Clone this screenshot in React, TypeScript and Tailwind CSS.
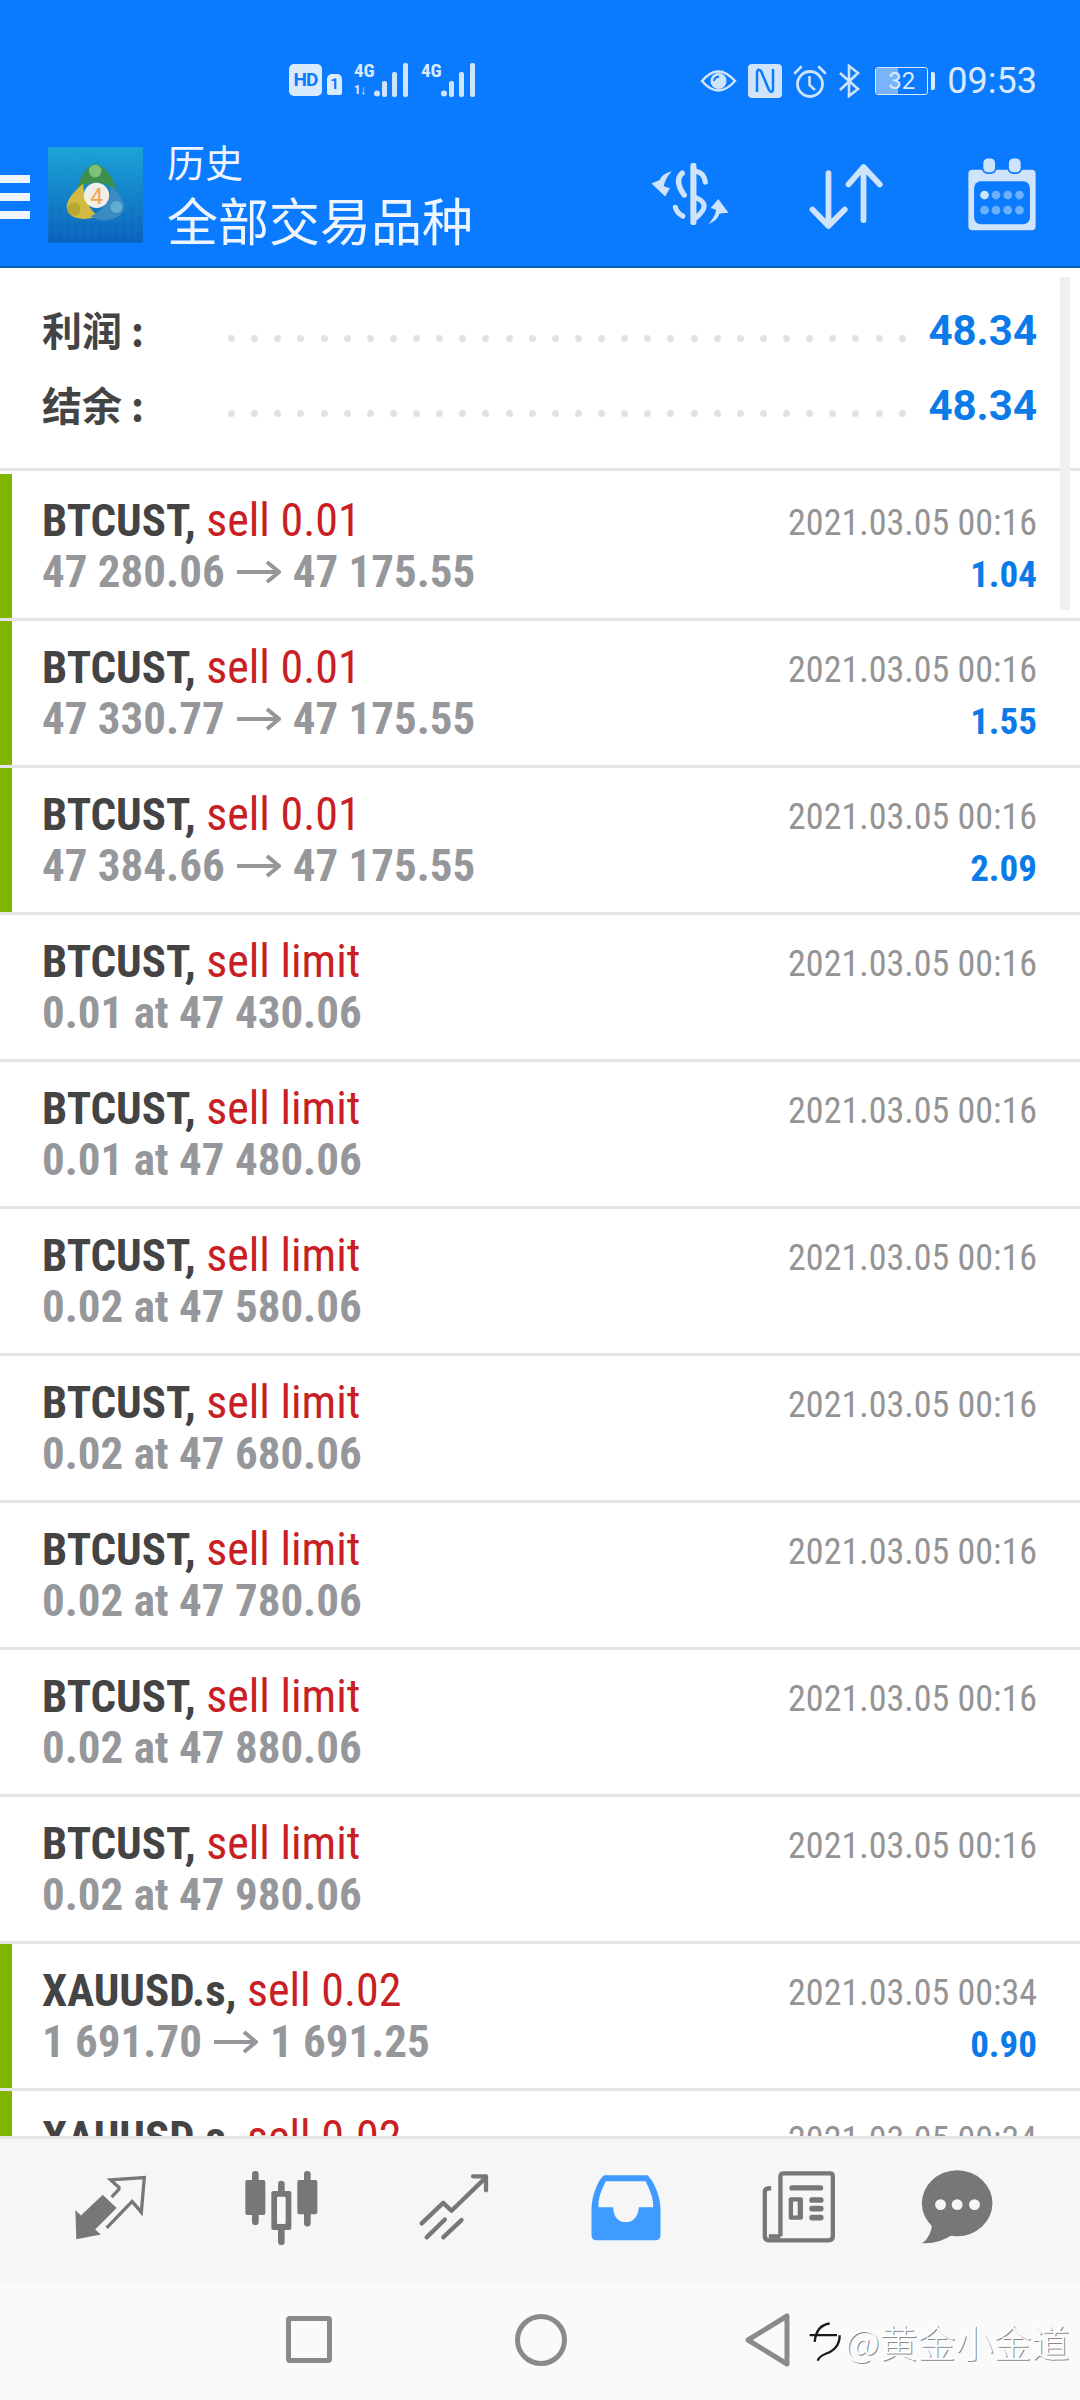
const PALE = "#cfe4fb";
const ICON = "#777777";

const rows = [
  { sym: "BTCUST,", act: "sell 0.01", from: "47 280.06", to: "47 175.55", date: "2021.03.05 00:16", val: "1.04" },
  { sym: "BTCUST,", act: "sell 0.01", from: "47 330.77", to: "47 175.55", date: "2021.03.05 00:16", val: "1.55" },
  { sym: "BTCUST,", act: "sell 0.01", from: "47 384.66", to: "47 175.55", date: "2021.03.05 00:16", val: "2.09" },
  { sym: "BTCUST,", act: "sell limit", from: "0.01 at 47 430.06", date: "2021.03.05 00:16" },
  { sym: "BTCUST,", act: "sell limit", from: "0.01 at 47 480.06", date: "2021.03.05 00:16" },
  { sym: "BTCUST,", act: "sell limit", from: "0.02 at 47 580.06", date: "2021.03.05 00:16" },
  { sym: "BTCUST,", act: "sell limit", from: "0.02 at 47 680.06", date: "2021.03.05 00:16" },
  { sym: "BTCUST,", act: "sell limit", from: "0.02 at 47 780.06", date: "2021.03.05 00:16" },
  { sym: "BTCUST,", act: "sell limit", from: "0.02 at 47 880.06", date: "2021.03.05 00:16" },
  { sym: "BTCUST,", act: "sell limit", from: "0.02 at 47 980.06", date: "2021.03.05 00:16" },
  { sym: "XAUUSD.s,", act: "sell 0.02", from: "1 691.70", to: "1 691.25", date: "2021.03.05 00:34", val: "0.90" },
  { sym: "XAUUSD.s,", act: "sell 0.02", from: "1 691.70", to: "1 691.25", date: "2021.03.05 00:34", val: "0.90" },
];

function Signal() {
  return (
    <svg width="36" height="34" viewBox="0 0 36 34">
      <circle cx="3" cy="30.5" r="3" fill={PALE} />
      <rect x="8" y="18" width="5" height="16" rx="2" fill={PALE} />
      <rect x="18" y="9" width="5" height="25" rx="2" fill={PALE} />
      <rect x="29" y="0" width="5" height="34" rx="2" fill={PALE} />
    </svg>
  );
}

function StatusBar() {
  return (
    <div className="h-[146px] pt-[63px] pl-[289px] pr-[43px] flex items-start justify-between text-[#d9eafd]">
      <div className="flex items-start h-[34px]">
        <div className="w-[33px] h-[32px] mt-[1px] rounded-[5px] bg-[#d9eafd] text-[#0a7aff] text-[19px] font-bold font-['Roboto'] leading-[32px] text-center tracking-tighter">
          HD
        </div>
        <div className="ml-[5px] mt-[11px] w-[15px] h-[21px] rounded-t-[5px] rounded-b-[2px] bg-[#d9eafd] text-[#0a7aff] text-[15px] font-bold font-['Roboto'] leading-[21px] text-center">
          1
        </div>
        <div className="ml-[12px] w-[20px] flex flex-col font-['Roboto'] font-bold font-stretch-condensed leading-none">
          <span className="text-[19px] -mt-[2px]">4G</span>
          <span className="text-[13px] mt-[3px] tracking-tighter">1↓</span>
        </div>
        <Signal />
        <div className="ml-[11px] w-[20px] font-['Roboto'] font-bold font-stretch-condensed leading-none">
          <span className="text-[19px] block -mt-[2px]">4G</span>
        </div>
        <Signal />
      </div>
      <div className="flex items-center h-[36px]">
        <svg width="37" height="26" viewBox="0 0 37 26">
          <path d="M2 13 Q18 -6 35 13 Q18 32 2 13Z" fill="none" stroke={PALE} strokeWidth="2.5" />
          <circle cx="18.5" cy="13" r="8" fill={PALE} />
          <path d="M14 13 Q14.5 9 19 8.5" fill="none" stroke="#0a7aff" strokeWidth="2" />
        </svg>
        <svg className="ml-[11px]" width="34" height="34" viewBox="0 0 34 34">
          <rect width="34" height="34" rx="4" fill={PALE} />
          <path d="M9 28 L9 8 Q10 4 13 7 L21 26 Q24 30 25 26 L25 5" fill="none" stroke="#0a7aff" strokeWidth="2.5" />
        </svg>
        <svg className="ml-[11px]" width="34" height="33" viewBox="0 0 34 33">
          <circle cx="17" cy="19" r="12.5" fill="none" stroke={PALE} strokeWidth="2.8" />
          <path d="M16.5 11 L16.5 20 L22 25" fill="none" stroke={PALE} strokeWidth="2.6" />
          <path d="M2 8 L8 2 M26 2 L32 8" stroke={PALE} strokeWidth="2.6" strokeLinecap="round" />
        </svg>
        <svg className="ml-[11px]" width="22" height="34" viewBox="0 0 22 34">
          <path d="M2 9 L20 25 L11 32 L11 2 L20 9 L2 26" fill="none" stroke={PALE} strokeWidth="2.6" />
        </svg>
        <div className="ml-[15px] relative w-[53px] h-[28px] rounded-[3px] border border-[#d9eafd] overflow-hidden text-center font-['Roboto'] text-[24px] leading-[26px]">
          <div className="absolute left-0 top-0 bottom-0 w-[22px] bg-[#79b4fb]" />
          <span className="relative">32</span>
        </div>
        <div className="ml-[3px] w-[4px] h-[18px] rounded-r-[2px] bg-[#d9eafd]" />
        <span className="ml-[12px] font-['Roboto'] text-[36px] leading-none">09:53</span>
      </div>
    </div>
  );
}

function Mt4Logo() {
  return (
    <svg width="95" height="96" viewBox="24 20 286 288">
      <defs>
        <linearGradient id="mt" x1="0" y1="0" x2="0" y2="1">
          <stop offset="0" stopColor="#1aa3d6" />
          <stop offset="1" stopColor="#0a62bd" />
        </linearGradient>
        <pattern id="mtgrid" width="24" height="24" patternUnits="userSpaceOnUse">
          <path d="M24 0 L0 0 L0 24" fill="none" stroke="#ffffff" strokeOpacity="0.08" strokeWidth="2" />
        </pattern>
      </defs>
      <rect x="24" y="20" width="286" height="288" fill="url(#mt)" />
      <rect x="24" y="20" width="286" height="288" fill="url(#mtgrid)" />
      <path d="M112 148 Q124 82 166 70 Q212 82 230 150 Q196 126 170 126 Q142 126 112 148Z" fill="#3f8f4c" />
      <circle cx="166" cy="92" r="19" fill="#7cc27a" />
      <path d="M130 130 Q80 170 80 202 Q88 236 130 236 Q150 236 176 228 Q132 196 130 130Z" fill="#d3bb42" />
      <circle cx="102" cy="206" r="20" fill="#b9a734" />
      <path d="M214 136 Q256 172 254 206 Q238 238 196 240 Q176 240 152 228 Q206 206 214 136Z" fill="#3a8cc0" />
      <circle cx="230" cy="200" r="18" fill="#62aed0" />
      <circle cx="170" cy="165" r="38" fill="#f4efe6" />
      <text x="170" y="190" textAnchor="middle" fontSize="68" fontFamily="Roboto" fill="#efa650">4</text>
    </svg>
  );
}

function Header() {
  return (
    <div className="h-[122px] border-b-[2px] border-[#0a5fa8] flex items-start">
      <div className="w-[30px] mt-[29px] flex flex-col gap-[10px]">
        <div className="h-[8px] bg-[#eef5fe]" />
        <div className="h-[8px] bg-[#eef5fe]" />
        <div className="h-[8px] bg-[#eef5fe]" />
      </div>
      <div className="ml-[18px] mt-[1px]">
        <Mt4Logo />
      </div>
      <div className="ml-[24px] flex flex-col text-[#eef5fe] font-['Noto_Sans_CJK_SC',sans-serif]">
        <span className="text-[38px] leading-[44px] -mt-[7px]">历史</span>
        <span className="text-[51px] leading-[60px] mt-[6px]">全部交易品种</span>
      </div>
      <div className="ml-auto pr-[43px] flex items-start">
        <svg className="mt-[17px]" width="80" height="62" viewBox="320 368 230 182">
          <g fill="none" stroke={PALE} strokeWidth="18" strokeLinecap="round">
            <path d="M445 376 L445 542" />
            <path d="M412 398 Q388 420 418 462" strokeWidth="16" />
            <path d="M453 392 Q476 396 480 424" strokeWidth="15" />
            <path d="M453 470 Q500 490 453 528" strokeWidth="15" />
            <path d="M392 498 Q396 515 414 524" strokeWidth="15" />
          </g>
          <path d="M382 392 Q352 400 346 418 L322 428 L362 466 L376 442 L358 436 Q362 412 382 392Z" fill={PALE} />
          <path d="M488 548 Q516 536 522 516 L548 514 L518 474 L496 500 L512 506 Q508 528 488 548Z" fill={PALE} />
        </svg>
        <svg className="ml-[79px] mt-[17px]" width="75" height="68" viewBox="780 365 220 200">
          <g fill="none" stroke={PALE} strokeWidth="17" strokeLinecap="round" strokeLinejoin="round">
            <path d="M837 395 L837 548 M790 502 L837 550 L885 502" />
            <path d="M940 533 L940 377 M896 428 L940 377 L988 428" />
          </g>
        </svg>
        <svg className="ml-[83px] mt-[11px]" width="70" height="74" viewBox="1240 350 206 220">
          <rect x="1243" y="388" width="200" height="180" rx="12" fill={PALE} />
          <rect x="1260" y="422" width="166" height="128" rx="20" fill="#0a7aff" />
          <rect x="1285" y="352" width="40" height="46" rx="16" fill={PALE} stroke="#0a7aff" strokeWidth="5" />
          <rect x="1361" y="352" width="40" height="46" rx="16" fill={PALE} stroke="#0a7aff" strokeWidth="5" />
          {[1291, 1325, 1360, 1395].map((x, i) => (
            <circle key={x} cx={x} cy="463" r="13" fill={i === 0 ? PALE : "#6fb0fb"} />
          ))}
          {[1291, 1325, 1360, 1395].map((x) => (
            <circle key={x} cx={x} cy="508" r="13" fill="#6fb0fb" />
          ))}
        </svg>
      </div>
    </div>
  );
}

function SummaryLine({ label }: { label: string }) {
  return (
    <div className="h-[75px] flex items-center">
      <span className="w-[186px] -mt-[4px] font-['Noto_Sans_CJK_SC',sans-serif] font-bold text-[40px] leading-none text-[#444444] whitespace-pre">
        {label}
      </span>
      <div className="w-[678px] mt-[16px] flex justify-between">
        {Array.from({ length: 30 }).map((_, i) => (
          <span key={i} className="w-[7px] h-[7px] rounded-full bg-[#e2e2e2]" />
        ))}
      </div>
      <span className="ml-auto font-['Roboto'] font-bold text-[42px] leading-none text-[#0c7bea]">48.34</span>
    </div>
  );
}

function Row({ r }: { r: (typeof rows)[number] }) {
  return (
    <div className="h-[147px] border-b-[3px] border-[#e4e4e4] flex">
      <div className={r.to ? "w-[12px] bg-[#80b500]" : "w-[12px]"} />
      <div className="flex-1 pl-[30px] pr-[43px] pt-[21px] flex justify-between font-['Roboto'] font-stretch-condensed">
        <div className="flex flex-col">
          <div className="text-[45px] leading-[51px] whitespace-pre">
            <span className="font-bold text-[#444444]">{r.sym} </span>
            <span className="text-[46px] text-[#c81e24]">{r.act}</span>
          </div>
          <div className="flex items-center text-[45px] leading-[51px] font-bold text-[#96979b] whitespace-pre">
            <span>{r.from}</span>
            {r.to && (
              <>
                <svg className="mx-[12px]" width="44" height="24" viewBox="0 0 44 24">
                  <path d="M0 12 L41 12 M30 2 L42 12 L30 22" fill="none" stroke="#96979b" strokeWidth="4" />
                </svg>
                <span>{r.to}</span>
              </>
            )}
          </div>
        </div>
        <div className="flex flex-col items-end pt-[3px]">
          <div className="text-[36px] leading-[51px] text-[#949494]">{r.date}</div>
          <div className="text-[37px] leading-[51px] font-bold text-[#0c7bea]">{r.val}</div>
        </div>
      </div>
    </div>
  );
}

function BottomNav() {
  return (
    <div className="h-[146px] shrink-0 bg-[#f6f6f6] border-t-[3px] border-[#e6e6e6] flex items-start pt-[31px]">
      <svg className="ml-[73px] mt-[5px]" width="74" height="66" viewBox="210 285 220 200">
        <path d="M215 392 L232 408 L298 345 L340 385 L275 450 L292 465 L218 480Z" fill={ICON} />
        <path d="M350 325 L322 300 L424 293 L415 398 L387 365 L310 445 M350 325 L325 352" fill="none" stroke={ICON} strokeWidth="10" />
      </svg>
      <svg className="ml-[96px]" width="77" height="76" viewBox="705 270 225 228">
        <rect x="729" y="273" width="20" height="162" rx="10" fill={ICON} />
        <rect x="709" y="300" width="60" height="105" rx="6" fill={ICON} />
        <rect x="807" y="302" width="20" height="193" rx="10" fill={ICON} />
        <rect x="787" y="333" width="60" height="117" rx="6" fill={ICON} />
        <rect x="804" y="350" width="26" height="82" rx="4" fill="#f6f6f6" />
        <rect x="885" y="273" width="20" height="167" rx="10" fill={ICON} />
        <rect x="865" y="300" width="60" height="103" rx="6" fill={ICON} />
      </svg>
      <svg className="ml-[98px] mt-[3px]" width="72" height="68" viewBox="1210 278 215 205">
        <g fill="none" stroke={ICON} strokeWidth="13" strokeLinecap="round" strokeLinejoin="round">
          <path d="M1220 430 L1285 368 L1310 392 L1410 295" />
          <path d="M1375 288 L1414 288 L1414 330" />
          <path d="M1235 472 L1290 418 M1285 472 L1340 420" />
        </g>
      </svg>
      <svg className="ml-[99px] mt-[4px]" width="74" height="67" viewBox="145 280 212 202">
        <path d="M147 385 C147 350 165 300 185 284 L315 284 C335 300 355 350 355 385 L355 465 Q355 480 340 480 L162 480 Q147 480 147 465Z" fill="#3f9bff" />
        <path d="M190 302 L310 302 Q335 350 333 380 L290 380 Q285 425 250 425 Q215 425 212 380 L168 380 Q165 350 190 302Z" fill="#f6f6f6" />
      </svg>
      <svg className="ml-[98px]" width="76" height="73" viewBox="645 270 222 220">
        <path d="M700 470 L700 290 Q700 280 710 280 L850 280 Q858 280 858 290 L858 470 Q858 482 845 482 L665 482 Q653 482 653 470 L653 335 Q653 325 672 325" fill="none" stroke={ICON} strokeWidth="13" />
        <path d="M665 470 L700 470" stroke={ICON} strokeWidth="13" />
        <rect x="727" y="316" width="102" height="16" rx="8" fill={ICON} />
        <rect x="725" y="352" width="43" height="68" rx="6" fill={ICON} />
        <rect x="738" y="365" width="14" height="42" fill="#f6f6f6" />
        <rect x="787" y="352" width="43" height="17" rx="8" fill={ICON} />
        <rect x="787" y="378" width="43" height="17" rx="8" fill={ICON} />
        <rect x="787" y="405" width="43" height="17" rx="8" fill={ICON} />
      </svg>
      <svg className="ml-[83px]" width="75" height="74" viewBox="1108 272 212 218">
        <ellipse cx="1213" cy="370" rx="104" ry="97" fill={ICON} />
        <path d="M1140 430 Q1135 470 1110 488 Q1160 490 1200 462Z" fill={ICON} />
        <circle cx="1164" cy="374" r="16" fill="#f6f6f6" />
        <circle cx="1213" cy="374" r="16" fill="#f6f6f6" />
        <circle cx="1264" cy="374" r="16" fill="#f6f6f6" />
      </svg>
    </div>
  );
}

function SystemNav() {
  return (
    <div className="relative h-[118px] shrink-0 bg-[#fafafa] flex items-start pt-[34px] pl-[286px]">
      <div className="w-[46px] h-[47px] rounded-[4px] border-[5px] border-[#8a8a8a]" />
      <div className="ml-[183px] w-[52px] h-[52px] -mt-[2px] rounded-full border-[5px] border-[#8a8a8a]" />
      <svg className="ml-[177px] -mt-[3px]" width="46" height="54" viewBox="0 0 46 54">
        <path d="M43 3 L43 51 L4 27Z" fill="none" stroke="#8a8a8a" strokeWidth="5" strokeLinejoin="round" />
      </svg>
      <div className="absolute left-[808px] top-[38px] flex items-center">
        <svg width="35" height="42" viewBox="25 35 105 125">
          <path d="M45 100 Q50 50 90 45 M30 80 L112 80 M120 80 Q120 120 80 135 Q55 145 55 157" fill="none" stroke="#1a1a1a" strokeWidth="7" />
        </svg>
        <span className="ml-[2px] font-['Noto_Sans_CJK_SC',sans-serif] font-light text-[38px] leading-none text-[#ffffff] [text-shadow:1px_1px_0_#8a8a8a]">
          @黄金小金道
        </span>
      </div>
    </div>
  );
}

export default function App() {
  return (
    <div className="relative w-[1080px] h-[2400px] bg-white flex flex-col overflow-hidden">
      <div className="shrink-0 bg-[#0a7aff]">
        <StatusBar />
        <Header />
      </div>
      <div className="shrink-0 h-[203px] pl-[42px] pr-[43px] pt-[25px] border-b-[3px] border-[#e4e4e4]">
        <SummaryLine label="利润 :" />
        <SummaryLine label="结余 :" />
      </div>
      <div className="flex-1 min-h-0 overflow-hidden pt-[3px]">
        {rows.map((r, i) => (
          <Row key={i} r={r} />
        ))}
      </div>
      <div className="absolute left-[1060px] top-[277px] w-[10px] h-[333px] bg-[#f0f0f0]" />
      <BottomNav />
      <SystemNav />
    </div>
  );
}
